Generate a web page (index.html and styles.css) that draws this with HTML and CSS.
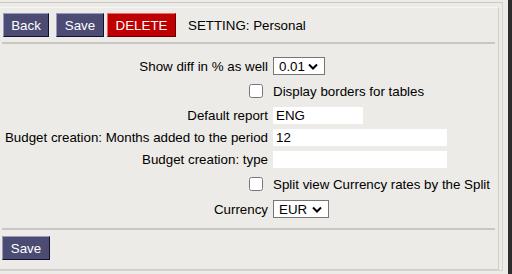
FILE: index.html
```html
<!DOCTYPE html>
<html lang="en">
<head>
  <meta charset="UTF-8">
  <meta name="viewport" content="width=device-width, initial-scale=1.0">
  <title>Setting: Personal</title>
  <link rel="stylesheet" href="styles.css">
</head>
<body>
  <div class="page">
    <div class="outer">
      <div class="panel">
        <div class="toolbar">
          <button class="btn btn-back">Back</button>
          <button class="btn btn-save">Save</button>
          <button class="btn btn-delete">DELETE</button>
          <span class="title">SETTING: Personal</span>
        </div>
        <hr class="sep">
        <div class="form">
          <label class="lbl">Show diff in % as well</label>
          <div class="field">
            <select class="sel sel-diff">
              <option>0.01</option>
            </select>
          </div>

          <span class="lbl chk-cell"><input type="checkbox" class="chk"></span>
          <div class="field chk-text">Display borders for tables</div>

          <label class="lbl">Default report</label>
          <div class="field"><input type="text" class="txt txt-short" value="ENG"></div>

          <label class="lbl">Budget creation: Months added to the period</label>
          <div class="field"><input type="text" class="txt txt-long" value="12"></div>

          <label class="lbl">Budget creation: type</label>
          <div class="field"><input type="text" class="txt txt-long" value=""></div>

          <span class="lbl chk-cell"><input type="checkbox" class="chk"></span>
          <div class="field chk-text">Split view Currency rates by the Split</div>

          <label class="lbl">Currency</label>
          <div class="field">
            <select class="sel sel-cur">
              <option>EUR</option>
            </select>
          </div>
        </div>
        <hr class="sep sep-bottom">
        <div class="footer">
          <button class="btn btn-save">Save</button>
        </div>
      </div>
    </div>
  </div>
  <div class="scrollbar"></div>
</body>
</html>
```

FILE: styles.css
```css
body {
  margin: 0;
  height: 274px;
  display: flex;
  background: #ecebe7;
  font-family: "Liberation Sans", Arial, sans-serif;
  font-size: 13.33px;
  color: #000;
  overflow: hidden;
}
.page {
  flex: 1;
  padding-top: 2px;
}
.outer {
  width: 503px;
  height: 269px;
  border-top: 1px solid #cbc9c5;
  border-right: 1px solid #d6d4d0;
  border-bottom: 1px solid #d6d4d0;
  box-sizing: border-box;
  padding-top: 4px;
}
.panel {
  width: 499px;
  height: 263px;
  box-sizing: border-box;
  border-top: 1px solid #f6f5f2;
  border-right: 1px solid #cfcdc9;
  border-bottom: 1px solid #cfcdc9;
  padding-top: 5px;
}
.toolbar {
  display: flex;
  align-items: center;
  height: 24px;
  padding-left: 3px;
}
.btn {
  height: 24px;
  padding: 0;
  margin-right: 7px;
  font-family: "Liberation Sans", Arial, sans-serif;
  font-size: 13.33px;
  color: #fff;
  background: #4b4b73;
  border: 1px solid;
  border-color: #9898c0 #10102a #10102a #9898c0;
  cursor: pointer;
}
.btn-back { width: 46px; }
.btn-save { width: 48px; margin-right: 3px; }
.btn-delete {
  width: 69px;
  background: #c00000;
  border-color: #e66 #600 #600 #e66;
}
.title {
  margin-left: 5px;
}
.sep {
  margin: 5px 3px 0 2px;
  border: none;
  border-top: 2px solid #c9c7c3;
  height: 0;
}
.form {
  display: grid;
  grid-template-columns: 268px 1fr;
  column-gap: 5px;
  row-gap: 5px;
  padding-top: 13px;
  align-items: center;
}
.lbl {
  text-align: right;
  line-height: 17px;
}
.chk-cell {
  display: flex;
  justify-content: flex-end;
  align-items: center;
  height: 22px;
  padding-right: 5px;
}
.chk {
  margin: 0;
  width: 14px;
  height: 14px;
}
.field {
  line-height: 17px;
}
.txt {
  height: 17px;
  box-sizing: border-box;
  border: none;
  background: #fff;
  padding: 0 3px;
  font-family: "Liberation Sans", Arial, sans-serif;
  font-size: 13.33px;
  display: block;
}
.txt-short { width: 90px; }
.txt-long { width: 174px; }
.sel {
  display: block;
  height: 18px;
  box-sizing: border-box;
  border: 1px solid #767676;
  border-radius: 0;
  appearance: none;
  background: #fff url("data:image/svg+xml,%3Csvg xmlns='http://www.w3.org/2000/svg' width='10' height='7' viewBox='0 0 10 7'%3E%3Cpath d='M1 1.5l4 4 4-4' fill='none' stroke='%23000' stroke-width='2'/%3E%3C/svg%3E") no-repeat right 6px center;
  font-family: "Liberation Sans", Arial, sans-serif;
  font-size: 13.33px;
  padding: 0 0 0 5px;
}
.sel-diff { width: 52px; }
.sel-cur { width: 56px; }
.sep-bottom {
  margin-top: 10px;
}
.footer {
  padding: 6px 0 0 2px;
}
.scrollbar {
  width: 4px;
  margin-left: 4px;
  background: #2d2d2d;
}
```
